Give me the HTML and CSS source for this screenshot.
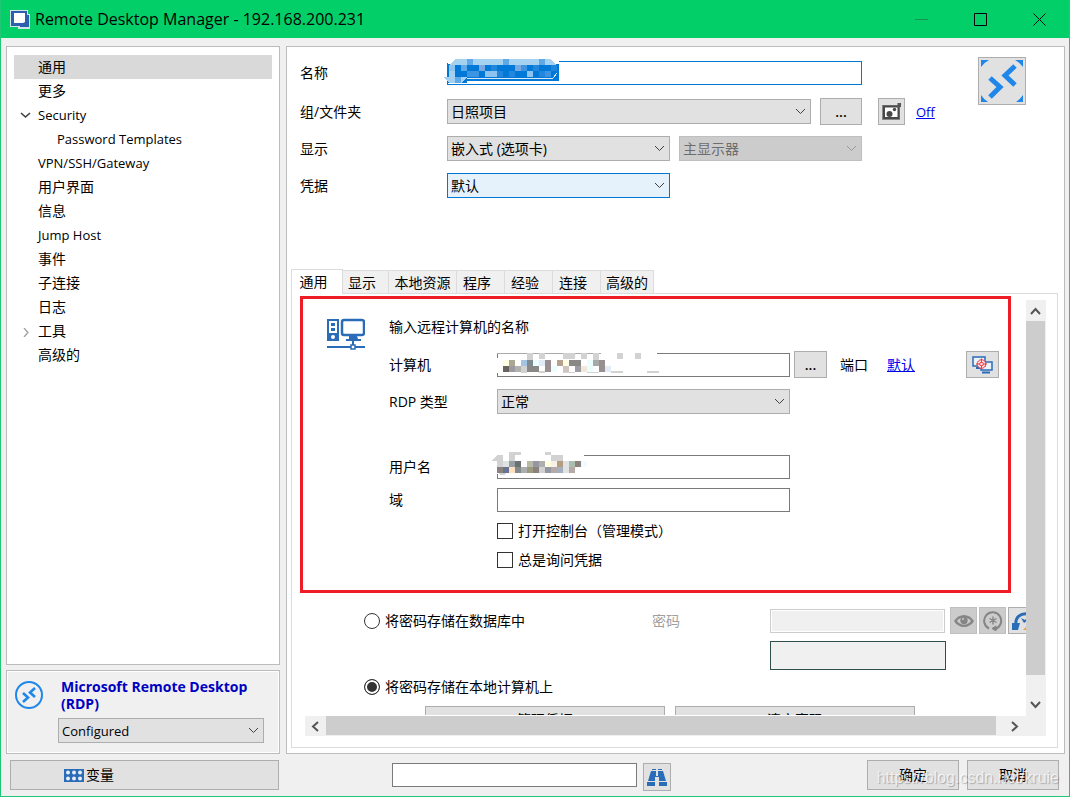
FILE: index.html
```html
<!DOCTYPE html>
<html lang="zh-CN">
<head>
<meta charset="utf-8">
<title>Remote Desktop Manager - 192.168.200.231</title>
<link rel="stylesheet" href="styles.css">
</head>
<body>
<svg class="defs" width="0" height="0" aria-hidden="true">
  <symbol id="chev" viewBox="0 0 11 7"><path d="M1 1l4.500 4.500L10 1" fill="none" stroke="currentColor"/></symbol>
</svg>
<div class="window">
  <header class="titlebar">
    <svg class="app-icon" width="20" height="19" viewBox="0 0 20 19"><path d="M0 0h18v4h2v15H8v-2H0z" fill="#cfe3e6"/><path d="M1 1h16v4h2v12h-9v-1H1z" fill="#2c5fae"/><path d="M4 3h11v9l-2 1H4z" fill="#fff"/></svg>
    <h1>Remote Desktop Manager - 192.168.200.231</h1>
    <div class="caption">
      <button type="button" class="dim" aria-label="最小化"><svg width="13" height="13"><path d="M0 6.500h13" stroke="currentColor"/></svg></button>
      <button type="button" aria-label="最大化"><svg width="13" height="13"><path d="M.5.5h12v12H.5z" fill="none" stroke="currentColor"/></svg></button>
      <button type="button" aria-label="关闭"><svg width="13" height="13"><path d="M.5.5l12 12M12.500.5l-12 12" stroke="currentColor"/></svg></button>
    </div>
  </header>

  <div class="content">
    <div class="side">
      <nav class="tree">
        <a href="#" class="active">通用</a>
        <a href="#">更多</a>
        <a href="#" class="latin"><svg class="twist" width="11" height="7"><path d="M1 1l4.500 4L10 1" fill="none" stroke="#404040" stroke-width="1.600"/></svg>Security</a>
        <a href="#" class="latin child">Password Templates</a>
        <a href="#" class="latin">VPN/SSH/Gateway</a>
        <a href="#">用户界面</a>
        <a href="#">信息</a>
        <a href="#" class="latin">Jump Host</a>
        <a href="#">事件</a>
        <a href="#">子连接</a>
        <a href="#">日志</a>
        <a href="#"><svg class="twist" width="11" height="9"><path d="M4 0l4 4.500L4 9" fill="none" stroke="#a0a0a0" stroke-width="1.300"/></svg>工具</a>
        <a href="#">高级的</a>
      </nav>
      <section class="kind">
        <svg width="28" height="28" viewBox="0 0 28 28" fill="none" stroke="#1f86ea"><circle cx="14" cy="14" r="13" stroke-width="2"/><path d="M8 12l5 4.500L8 21M20 7l-5 4.500L20 16" stroke-width="2.600"/></svg>
        <div class="kind-body">
          <h2>Microsoft Remote Desktop (RDP)</h2>
          <span class="select latin"><select aria-label="状态"><option>Configured</option></select><svg class="chev"><use href="#chev"/></svg></span>
        </div>
      </section>
    </div>

    <main class="panel">
      <div class="head">
        <div class="form">
          <label for="name">名称</label>
          <div class="cell"><input id="name" class="focus" type="text">
            <svg class="mosaic m-name" width="120" height="26" shape-rendering="crispEdges">
              <path d="M4 1h112v4H4z" fill="#fff"/><path d="M4 6h112v17H24v2H4z" fill="#0078d7"/>
              <path d="M12 1h96l5 6H6z" fill="#a6d2f2"/><path d="M0 19h6v-6h6v6h12l-6 6H6z" fill="#a3d0f2"/>
              <path d="M60 1h6v6h-6zM96 1h6v6h-6zM18 7h6v6h-6zM12 19h6v6h-6z" fill="#5ea9e6"/>
              <path d="M24 1h6v6h-6z" fill="#5fabe9"/>
              <path d="M36 7h6v6h-6zM72 7h6v6h-6z" fill="#79a7df"/>
              <path d="M6 7h6v6H6zM42 13h12v6H42zM84 13h6v6h-6z" fill="#8fc3ef"/>
              <path d="M24 13h6v6h-6zM30 13h6v6h-6zM78 7h6v6h-6zM102 13h6v6h-6z" fill="#3d94e0"/>
              <path d="M54 13h6v6h-6zM66 13h6v6h-6zM96 13h6v6h-6zM48 7h6v6h-6zM90 7h6v6h-6zM108 7h6v6h-6z" fill="#2186dc"/>
              <path d="M24 20h86l4-5" fill="none" stroke="#d9ebfa"/>
            </svg>
          </div><span></span>

          <label for="folder">组/文件夹</label>
          <div class="cell folder">
            <span class="select"><select id="folder"><option>日照项目</option></select><svg class="chev"><use href="#chev"/></svg></span>
            <button type="button" class="btn dots">...</button>
          </div>
          <div class="extra">
            <button type="button" class="btn sq" aria-label="截图"><svg width="21" height="18" viewBox="0 0 21 18"><path d="M1 2h18v15H1z" fill="#888"/><path d="M3 3.500h14.500v11.500H3z" fill="#fff" stroke="#484848" stroke-width="2"/><circle cx="8.500" cy="11" r="3" fill="#484848"/><circle cx="13.500" cy="6.500" r="1.700" fill="#484848"/><path d="M16.500 0H20v4h-3.500z" fill="#555"/></svg></button>
            <a href="#" class="latin">Off</a>
          </div>

          <label for="display">显示</label>
          <div class="cell pair">
            <span class="select"><select id="display"><option>嵌入式 (选项卡)</option></select><svg class="chev"><use href="#chev"/></svg></span>
            <span class="select off"><select aria-label="显示器" disabled><option>主显示器</option></select><svg class="chev"><use href="#chev"/></svg></span>
          </div><span></span>

          <label for="cred">凭据</label>
          <div class="cell pair">
            <span class="select hot"><select id="cred"><option>默认</option></select><svg class="chev"><use href="#chev"/></svg></span>
          </div><span></span>
        </div>
        <button type="button" class="btn logo" aria-label="图标"><svg width="42" height="42" viewBox="0 0 42 42" fill="#1f86ea"><path d="M0 0h8a24 24 0 0 0-8 7zM42 0h-8a24 24 0 0 1 8 7zM0 42h7a24 24 0 0 1-7-7zM42 42h-7a24 24 0 0 0 7-7z"/><path d="M9 18l10 9-10 10M34 6L24 15.500 34 25" fill="none" stroke="#1f86ea" stroke-width="5"/></svg></button>
      </div>

      <div class="tabs" role="tablist">
        <button type="button" role="tab" aria-selected="true" class="tab on">通用</button>
        <button type="button" role="tab" class="tab near">显示</button>
        <button type="button" role="tab" class="tab wide">本地资源</button>
        <button type="button" role="tab" class="tab">程序</button>
        <button type="button" role="tab" class="tab">经验</button>
        <button type="button" role="tab" class="tab">连接</button>
        <button type="button" role="tab" class="tab mid">高级的</button>
      </div>

      <div class="pane">
        <div class="view">
          <div class="host">
            <svg class="host-icon" width="38" height="32" viewBox="0 0 38 32"><path d="M0 1h12v22H0z" fill="#2b6cb8"/><path d="M2 3h8v12H2z" fill="#fff"/><path d="M4 5h4v3H4zM4 10h4v3H4z" fill="#2b6cb8"/><circle cx="6" cy="19" r="2" fill="#fff"/><rect x="15" y="2" width="22" height="15" rx="2" fill="#fff" stroke="#2b6cb8" stroke-width="2.500"/><path d="M22 18h8l1 3h3v2H19v-2h3z" fill="#2b6cb8"/><path d="M0 29h38M26 23v4" stroke="#2b6cb8" stroke-width="2"/><rect x="24" y="27" width="4" height="4" fill="#fff" stroke="#2b6cb8" stroke-width="1.500"/></svg>
            <div class="rows">
              <p class="lead">输入远程计算机的名称</p>
              <div class="row">
                <label for="pc">计算机</label>
                <div class="cell"><input id="pc" type="text">
                  <svg class="mosaic m-pc" width="162" height="22" shape-rendering="crispEdges">
                    <path d="M2 1h158v20H0V6h2z" fill="#fff"/>
                    <path d="M0 1h104" stroke="#aaa"/>
                    <path d="M30 1h6v7h-6zM42 1h6v6h-6zM66 1h12v6H66zM84 1h6v6h-6zM96 1h6v7h-6zM120 1h6v6h-6zM138 1h6v6h-6zM24 14h6v7h-6zM42 19h6v2h-6zM66 20h12v1H66zM90 20h12v1H90zM114 19h12v2h-12zM150 19h12v2h-12z" fill="#d2d2d2"/>
                    <path d="M6 8h6v6H6zM66 8h6v6h-6z" fill="#ffffe4"/><path d="M12 8h6v6h-6z" fill="#aaa794"/><path d="M24 8h6v6h-6z" fill="#a5c3e3"/><path d="M30 8h6v6h-6z" fill="#7f8b91"/><path d="M36 8h6v6h-6zM90 8h6v6h-6zM54 14h6v6h-6zM90 14h6v6h-6z" fill="#ebfdfd"/><path d="M42 8h6v6h-6zM108 14h6v6h-6z" fill="#e3ebf7"/><path d="M48 8h6v12h-6zM102 8h6v12h-6z" fill="#988f91"/><path d="M60 8h6v6h-6z" fill="#b5a190"/><path d="M72 8h12v6H72zM30 14h12v6H30z" fill="#8a8887"/><path d="M96 8h6v6h-6z" fill="#a5a9a8"/>
                    <path d="M6 14h6v6H6z" fill="#696360"/><path d="M12 14h6v6h-6zM78 14h6v6h-6z" fill="#9c9ba2"/><path d="M18 14h6v6h-6z" fill="#b1b1ae"/><path d="M66 14h6v6h-6z" fill="#cfc4be"/><path d="M84 14h6v6h-6z" fill="#f1e7db"/>
                  </svg>
                </div>
                <div class="after">
                  <button type="button" class="btn dots">...</button>
                  <span>端口</span><a href="#">默认</a>
                  <button type="button" class="btn scan" aria-label="查找计算机"><svg width="21" height="18" viewBox="0 0 21 18" fill="none"><path d="M1 1h12v9H1zM9 6h11v8H9z" fill="#eaf2fa" stroke="#2b6cb8" stroke-width="1.500"/><path d="M4 12h4M10 16.500h8" stroke="#2b6cb8" stroke-width="2"/><circle cx="9.500" cy="8" r="4.300" fill="#ffe3e3" stroke="#ee3b45"/><circle cx="9.500" cy="8" r="1.800" stroke="#ee3b45"/><path d="M9.500 2.500v4M9.500 9.500v4M4 8h4M11 8h4" stroke="#ee3b45"/></svg></button>
                </div>
              </div>
              <div class="row">
                <label for="rdp">RDP 类型</label>
                <span class="select"><select id="rdp"><option>正常</option></select><svg class="chev"><use href="#chev"/></svg></span>
              </div>
              <div class="row close first">
                <label for="user">用户名</label>
                <div class="cell"><input id="user" type="text">
                  <svg class="mosaic m-user" width="96" height="24" shape-rendering="crispEdges">
                    <path d="M3 0h90v22H3z" fill="#fff"/>
                    <path d="M0 9l6-6h6v16H6V9zM18 0h12v3h-6v6h-6zM54 0h6v3h-6zM60 3h12v6H60zM8 21h8l-3 2h-4z" fill="#d2d2d2"/>
                    <path d="M12 9h6v6h-6zM72 9h6v6h-6zM72 15h6v6h-6z" fill="#dfe3e1"/><path d="M18 9h6v6h-6z" fill="#969fa6"/><path d="M24 9h6v6h-6z" fill="#6c706f"/><path d="M36 9h6v6h-6z" fill="#b9bba6"/><path d="M42 9h6v6h-6zM54 15h6v6h-6z" fill="#9598a4"/><path d="M48 9h6v6h-6zM30 15h6v6h-6z" fill="#adaeae"/><path d="M54 9h6v6h-6z" fill="#fffee0"/><path d="M60 9h6v6h-6z" fill="#f5f2ea"/><path d="M66 9h6v6h-6z" fill="#b59d80"/><path d="M78 9h6v6h-6z" fill="#aabdae"/><path d="M84 9h6v6h-6zM6 15h6v6H6zM42 15h6v6h-6z" fill="#8b8280"/><path d="M90 9h6v6h-6z" fill="#f0fdff"/>
                    <path d="M12 15h6v6h-6z" fill="#677393"/><path d="M18 15h6v6h-6z" fill="#ffdfbf"/><path d="M24 15h6v6h-6z" fill="#828a8c"/><path d="M36 15h6v6h-6z" fill="#9b9c7d"/><path d="M48 15h6v6h-6z" fill="#d0d1d1"/><path d="M60 15h6v6h-6zM78 15h6v6h-6z" fill="#b5aaa7"/><path d="M66 15h6v6h-6z" fill="#a4afc1"/>
                  </svg>
                </div>
              </div>
              <div class="row close">
                <label for="domain">域</label>
                <input id="domain" type="text">
              </div>
              <label class="check"><input type="checkbox">打开控制台（管理模式）</label>
              <label class="check"><input type="checkbox">总是询问凭据</label>
            </div>
          </div>

          <div class="store">
            <div class="pw">
              <label class="radio"><input type="radio" name="store">将密码存储在数据库中</label>
              <label for="pass" class="muted">密码</label>
              <input id="pass" type="password" disabled>
              <div class="tools">
                <button type="button" class="btn sq gray" aria-label="显示密码" disabled><svg width="20" height="16" viewBox="0 0 20 16"><path d="M0 8c5-8 15-8 20 0-5 8-15 8-20 0z" fill="#858585"/><path d="M3 8c4-5 10-5 14 0-4 5-10 5-14 0z" fill="#ccc"/><circle cx="10" cy="7.500" r="3.700" fill="#858585"/><circle cx="9" cy="6" r="1" fill="#ccc"/></svg></button>
                <button type="button" class="btn sq gray" aria-label="生成密码" disabled><svg width="20" height="20" viewBox="0 0 20 20" fill="none" stroke="#858585"><path d="M6 17.500a8.500 8.500 0 1 1 6 .5" stroke-width="2"/><path d="M10 5.500v8M6.500 7.500l7 4M13.500 7.500l-7 4" stroke-width="1.400"/><path d="M13 15l-4 2.500 4 2.500z" fill="#858585"/></svg></button>
                <button type="button" class="btn sq" aria-label="密码历史"><svg width="20" height="20" viewBox="0 0 20 20"><path d="M4 14C3 6 8 2 17 3" fill="none" stroke="#2b6cb8" stroke-width="3"/><path d="M0 12h8l-2 7H0zM9 7l4 2 3-3v3l-4 3z" fill="#2b6cb8"/><path d="M14 11l5 3v5h-8l3-3z" fill="#f5a11c"/></svg></button>
              </div>
            </div>
            <div class="strength"><output class="meter"></output></div>
            <label class="radio low"><input type="radio" name="store" checked>将密码存储在本地计算机上</label>
            <div class="actions">
              <button type="button" class="btn">管理凭据</button>
              <button type="button" class="btn">清空密码</button>
            </div>
          </div>
        </div>
        <div class="vbar">
          <button type="button" aria-label="向上"><svg width="11" height="8"><path d="M1 7l4.500-5L10 7" fill="none" stroke="#555" stroke-width="2"/></svg></button>
          <div class="vthumb"></div>
          <button type="button" aria-label="向下"><svg width="11" height="8"><path d="M1 1l4.500 5L10 1" fill="none" stroke="#555" stroke-width="2"/></svg></button>
        </div>
        <div class="hbar">
          <button type="button" aria-label="向左"><svg width="8" height="11"><path d="M7 1L2 5.500 7 10" fill="none" stroke="#555" stroke-width="2"/></svg></button>
          <div class="hthumb"></div>
          <button type="button" aria-label="向右"><svg width="8" height="11"><path d="M1 1l5 4.500L1 10" fill="none" stroke="#555" stroke-width="2"/></svg></button>
        </div>
        <div class="marker"></div>
      </div>
    </main>
  </div>

  <footer class="foot">
    <button type="button" class="btn vars"><svg width="20" height="13" viewBox="0 0 20 13"><path d="M0 0h20v13H0z" fill="#2b6cb8"/><g fill="#e8eef5"><circle cx="4" cy="3.500" r="2"/><circle cx="10" cy="3.500" r="2"/><circle cx="16" cy="3.500" r="2"/><circle cx="4" cy="9.500" r="2"/><circle cx="10" cy="9.500" r="2"/><circle cx="16" cy="9.500" r="2"/></g></svg>变量</button>
    <input class="find" type="text" aria-label="搜索">
    <button type="button" class="btn find-btn" aria-label="查找"><svg width="20" height="17" viewBox="0 0 20 17" fill="#2b6cb8"><path d="M5 0h4v1H5zM11 0h4v1h-4zM4 2h5v5h2V2h5l3 10h-7V8H8v4H1zM0 13h8v4H0zM12 13h8v4h-8z"/></svg></button>
    <div class="ok">
      <button type="button" class="btn">确定</button>
      <button type="button" class="btn">取消</button>
      <span class="watermark">https://blog.csdn.net/kruie</span>
    </div>
  </footer>
</div>
</body>
</html>
```
FILE: styles.css
```css
* { box-sizing: border-box; }
html, body { height: 100%; margin: 0; }
body, button, input, select {
  font-family: "Open Sans", "Noto Sans CJK SC", sans-serif;
  font-size: 14px;
  line-height: 20px;
  color: #000;
}
button, input, select { margin: 0; padding: 0; border-radius: 0; }
svg { display: block; flex: none; }
.defs { position: absolute; }
a { color: #0000ee; }
.latin, .latin select { font-size: 13px; }

.window {
  min-height: 100vh;
  display: flex;
  flex-direction: column;
  background: #f0f0f0;
  border: 1px solid #1fc777;
  border-top: 0;
}

.titlebar {
  display: flex;
  align-items: center;
  height: 38px;
  padding-left: 9px;
  background: #03cf69;
}
.titlebar h1 { margin: 0 auto 0 5px; font-size: 16px; font-weight: 400; }
.caption { display: flex; }
.caption button {
  display: grid;
  place-items: center;
  width: 59px;
  height: 38px;
  border: 0;
  background: none;
}
.caption .dim { color: #1a9152; }

.content {
  flex: 1;
  display: grid;
  grid-template-columns: 274px minmax(0, 1fr);
  gap: 6px;
  padding: 8px 4px 0 5px;
}
.side { display: flex; flex-direction: column; gap: 5px; }
.tree {
  flex: 1;
  padding: 8px 7px;
  background: #fff;
  border: 1px solid #bcbcbc;
}
.tree a {
  display: block;
  position: relative;
  padding-left: 24px;
  line-height: 24px;
  color: #000;
  text-decoration: none;
}
.tree .active { background: #d9d9d9; }
.tree .child { padding-left: 43px; }
.twist { position: absolute; left: 6px; top: 9px; }

.kind {
  display: flex;
  align-items: flex-start;
  gap: 15px;
  padding: 7px 15px 10px 8px;
  border: 1px solid #bcbcbc;
  outline: 1px solid #fff;
  outline-offset: -2px;
}
.kind > svg { margin-top: 3px; }
.kind-body { flex: 1; }
.kind h2 {
  margin: 0 0 6px 3px;
  font: 700 14px/17px "Open Sans", sans-serif;
  color: #0000c0;
}

.panel {
  display: flex;
  flex-direction: column;
  padding: 6px 6px 5px 4px;
  background: #fff;
  border: 1px solid #bcbcbc;
}
.head {
  display: flex;
  align-items: flex-start;
  padding: 0 32px 0 9px;
  margin-bottom: 65px;
}
.form {
  flex: 1;
  display: grid;
  grid-template-columns: 147px minmax(0, 1fr) 116px;
  grid-template-rows: 40px;
  grid-auto-rows: 37px;
  align-items: center;
}
.cell { position: relative; min-width: 0; }
.folder { display: flex; align-items: center; gap: 9px; }
.pair { display: grid; grid-template-columns: 223fr 183fr; gap: 9px; }
.extra { display: flex; align-items: center; gap: 11px; padding-left: 16px; }
.logo { width: 48px; height: 48px; margin-top: 4px; }

input[type=text], input[type=password] {
  display: block;
  width: 100%;
  height: 24px;
  padding: 0 4px;
  background: #fff;
  border: 1px solid #7a7a7a;
}
input[type=text].focus { border-color: #0078d7; }
.select { position: relative; display: block; flex: 1; }
.select select {
  appearance: none;
  display: block;
  width: 100%;
  height: 25px;
  padding: 0 20px 0 3px;
  background: #e1e1e1;
  border: 1px solid #adadad;
}
.chev {
  position: absolute;
  right: 5px;
  top: 9px;
  width: 11px;
  height: 7px;
  color: #404040;
  pointer-events: none;
}
.hot select { background: #e5f1fb; border-color: #0078d7; }
.off select { background: #ccc; border-color: #bfbfbf; color: #6d6d6d; opacity: 1; }
.off .chev { color: #999; }

.btn {
  display: flex;
  align-items: center;
  justify-content: center;
  background: #e1e1e1;
  border: 1px solid #adadad;
}
.sq { width: 27px; height: 27px; }
.gray { background: #ccc; border-color: #bfbfbf; }
.dots { width: 42px; height: 27px; font-weight: 600; }

.mosaic { position: absolute; pointer-events: none; }
.m-name { left: -4px; top: -3px; }
.m-pc { left: 0; top: -1px; }
.m-user { left: -6px; top: -3px; }

.tabs { display: flex; align-items: flex-end; }
.tab {
  width: 48px;
  height: 23px;
  padding: 2px 7px 0 0;
  background: #f0f0f0;
  border: 1px solid #dcdcdc;
  border-width: 1px 1px 0 0;
}
.tab.near { width: 46px; }
.tab.wide { width: 68px; padding-right: 0; }
.tab.mid { width: 53px; padding-right: 0; }
.tab.on {
  position: relative;
  z-index: 1;
  width: 52px;
  height: 25px;
  margin-bottom: -1px;
  padding-top: 0;
  background: #fff;
  border-left-width: 1px;
}

.pane {
  position: relative;
  flex: 1;
  display: grid;
  grid-template-columns: minmax(0, 1fr) 20px;
  grid-template-rows: 415px 20px;
  row-gap: 1px;
  padding: 6px 11px 11px 13px;
  border: 1px solid #dcdcdc;
}
.view { overflow: hidden; padding-top: 8px; }
.host { display: flex; padding: 0 27px 0 22px; }
.host-icon { margin: 10px 24px 0 0; }
.rows { flex: 1; }
.lead { margin: 0; line-height: 38px; }
.row {
  display: grid;
  grid-template-columns: 108px minmax(0, 1fr) 209px;
  align-items: center;
  height: 37px;
}
.row.close { height: 33px; }
.row.first { margin-top: 30px; }
.after { display: flex; align-items: center; padding-left: 4px; }
.after .dots { width: 33px; }
.after span { margin: 0 19px 0 13px; }
.scan { width: 33px; height: 27px; margin-left: auto; }

.check, .radio { display: flex; align-items: center; gap: 5px; }
.check { height: 29px; padding-left: 108px; }
.check input, .radio input {
  appearance: none;
  width: 16px;
  height: 16px;
  margin: 0;
  background: #fff;
  border: 1px solid #333;
}
.radio input { border-radius: 50%; }
.radio input:checked { background: #333; box-shadow: inset 0 0 0 2px #fff; }

.store { margin-top: 31px; padding-left: 59px; }
.pw {
  display: grid;
  grid-template-columns: minmax(0, 1fr) 118px 175px 81px;
  height: 31px;
  align-items: center;
}
.muted { color: #a0a0a0; }
.pw input[type=password] { background: #f0f0f0; border-color: #ccc; box-shadow: inset 0 0 0 1px #fff; }
.tools { display: flex; gap: 2px; padding-left: 5px; }
.tools .btn { flex: none; }
.strength { display: flex; justify-content: flex-end; padding: 5px 80px 5px 0; }
.meter { width: 176px; height: 29px; background: #f0f0f0; border: 1px solid #2f4f4f; }
.radio.low { height: 24px; }
.actions { display: flex; gap: 10px; padding: 7px 111px 0 61px; }
.actions .btn { flex: 1; height: 28px; }

.vbar, .hbar { display: flex; background: #f0f0f0; }
.vbar { flex-direction: column; grid-row: 1 / 3; grid-column: 2; }
.hbar { grid-row: 2; grid-column: 1; }
.vbar button, .hbar button {
  display: grid;
  place-items: center;
  width: 19px;
  height: 21px;
  border: 0;
  background: none;
}
.hbar button { height: 20px; }
.vthumb { flex: 1; margin: 0 1px 19px 0; background: #cdcdcd; }
.vbar button:last-child { margin-bottom: 21px; }
.hthumb { flex: 1; margin: 0 9px 1px 2px; background: #cdcdcd; }
.hbar button:last-child { margin-right: 2px; }

.marker {
  position: absolute;
  left: 8px;
  right: 46px;
  top: 2px;
  height: 297px;
  border: 3px solid #ee1c24;
  pointer-events: none;
}

.foot {
  display: flex;
  align-items: flex-start;
  height: 42px;
  padding: 6px 10px 0 9px;
}
.vars { width: 269px; height: 30px; gap: 2px; padding-right: 111px; }
.foot .find { width: 245px; margin: 3px 6px 0 113px; }
.find-btn { width: 28px; height: 28px; margin-top: 3px; }
.ok { position: relative; display: flex; gap: 8px; margin-left: auto; }
.ok .btn { width: 92px; height: 30px; }
.watermark {
  position: absolute;
  right: 0;
  top: 8px;
  font: 16px/20px "Liberation Sans", sans-serif;
  color: rgba(255, 255, 255, .7);
  text-shadow: 1px 1px 1px rgba(0, 0, 0, .25);
  white-space: nowrap;
  pointer-events: none;
}
```
